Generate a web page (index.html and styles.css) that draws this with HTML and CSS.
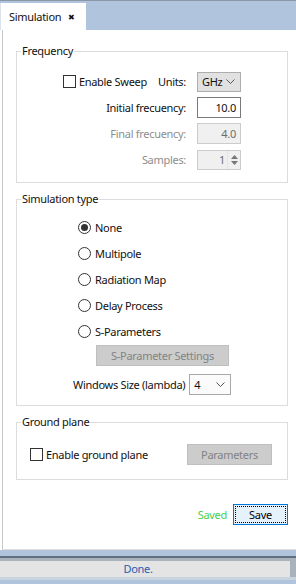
FILE: index.html
```html
<!DOCTYPE html>
<html lang="en">
<head>
    <meta charset="UTF-8">
    <meta name="viewport" content="width=device-width, initial-scale=1.0">
    <title>Simulation</title>
    <link rel="stylesheet" href="styles.css">
</head>
<body>
    <div class="tabbar">
        <div class="tab">Simulation <span class="tab-close">&#10006;</span></div>
    </div>

    <div class="panel">
        <!-- Frequency -->
        <fieldset class="group">
            <legend>Frequency</legend>
            <div class="freq">
                <div class="row">
                    <span class="check"></span>
                    <span class="check-label">Enable Sweep</span>
                    <span class="units">Units:</span>
                    <div class="combo">GHz
                        <svg class="chev" width="9" height="5" viewBox="0 0 9 5"><polyline points="0.5,0.5 4.5,4.5 8.5,0.5" fill="none" stroke="#555" stroke-width="1"/></svg>
                    </div>
                </div>
                <div class="row">
                    <span>Initial frecuency:</span>
                    <div class="field">10.0</div>
                </div>
                <div class="row disabled">
                    <span>Final frecuency:</span>
                    <div class="field off">4.0</div>
                </div>
                <div class="row disabled">
                    <span>Samples:</span>
                    <div class="spin">
                        <span class="spin-val">1</span>
                        <span class="spin-btns">
                            <svg width="7" height="4" viewBox="0 0 7 4"><polygon points="0,4 3.5,0 7,4" fill="#777"/></svg>
                            <svg width="7" height="4" viewBox="0 0 7 4"><polygon points="0,0 3.5,4 7,0" fill="#777"/></svg>
                        </span>
                    </div>
                </div>
            </div>
        </fieldset>

        <!-- Simulation type -->
        <fieldset class="group">
            <legend>Simulation type</legend>
            <div class="simtype">
                <div class="radios">
                    <div class="radio-row"><span class="radio on"></span>None</div>
                    <div class="radio-row"><span class="radio"></span>Multipole</div>
                    <div class="radio-row"><span class="radio"></span>Radiation Map</div>
                    <div class="radio-row"><span class="radio"></span>Delay Process</div>
                    <div class="radio-row"><span class="radio"></span>S-Parameters</div>
                </div>
                <button class="btn-off sparam">S-Parameter Settings</button>
                <div class="winsize">
                    <span>Windows Size (lambda)</span>
                    <div class="combo light">4
                        <svg class="chev" width="9" height="5" viewBox="0 0 9 5"><polyline points="0.5,0.5 4.5,4.5 8.5,0.5" fill="none" stroke="#555" stroke-width="1"/></svg>
                    </div>
                </div>
            </div>
        </fieldset>

        <!-- Ground plane -->
        <fieldset class="group">
            <legend>Ground plane</legend>
            <div class="ground">
                <div class="ground-check">
                    <span class="check"></span>
                    <span>Enable ground plane</span>
                </div>
                <button class="btn-off params">Parameters</button>
            </div>
        </fieldset>

        <div class="save-row">
            <span class="saved">Saved</span>
            <button class="save">Save</button>
        </div>
    </div>

    <div class="statusbar">
        <div class="status-line">
            <div class="status-text">Done.</div>
        </div>
    </div>
</body>
</html>
```

FILE: styles.css
```css
body {
    margin: 0;
    width: 296px;
    height: 584px;
    overflow: hidden;
    font-family: "Noto Sans", sans-serif;
    font-size: 11px;
    letter-spacing: -0.3px;
    color: #111;
    background-color: #fff;
    display: flex;
    flex-direction: column;
}
.tabbar {
    height: 29px;
    flex: none;
    background-color: #B0C4DE;
    border-top: 1px solid #8b97a6;
    display: flex;
    align-items: flex-end;
}
.tab {
    width: 86px;
    height: 27px;
    box-sizing: border-box;
    padding-left: 8px;
    background-color: #fff;
    border-left: 1px solid #dde3ea;
    display: flex;
    align-items: center;
}
.tab-close {
    font-size: 8px;
    margin-left: 7px;
}
.panel {
    height: 520px;
    flex: none;
    box-sizing: border-box;
    margin-left: 2px;
    border-left: 1px solid #c8c8c8;
    border-bottom: 1px solid #dedede;
    padding: 13px 8px 0 13px;
    display: flex;
    flex-direction: column;
}
.group {
    margin: 0 0 8px 0;
    padding: 0;
    min-width: 0;
    border: 1px solid #dcdcdc;
}
.group legend {
    margin-left: 4px;
    padding: 0 1px;
    line-height: 16px;
}
.freq {
    padding: 12px 46px 12px 0;
    display: flex;
    flex-direction: column;
    gap: 5px;
}
.row {
    display: flex;
    justify-content: flex-end;
    align-items: center;
    height: 21px;
}
.row.disabled {
    color: #8d8d8d;
}
.check {
    width: 13px;
    height: 13px;
    box-sizing: border-box;
    border: 1px solid #333;
    background-color: #fff;
    flex: none;
}
.check-label {
    margin-left: 3px;
}
.units {
    margin-left: 11px;
}
.combo {
    width: 44px;
    height: 20px;
    box-sizing: border-box;
    margin-left: 11px;
    padding: 0 5px 0 4px;
    background-color: #e1e1e1;
    border: 1px solid #adadad;
    display: flex;
    align-items: center;
    justify-content: space-between;
}
.combo.light {
    width: 42px;
    height: 21px;
    margin-left: 4px;
    background-color: #fbfbfb;
    border-color: #a9a9a9;
}
.field {
    width: 44px;
    height: 21px;
    box-sizing: border-box;
    margin-left: 11px;
    padding-right: 4px;
    border: 1px solid #7a7a7a;
    background-color: #fff;
    display: flex;
    align-items: center;
    justify-content: flex-end;
}
.field.off {
    border-color: #cccccc;
    background-color: #f0f0f0;
    color: #6d6d6d;
}
.spin {
    width: 44px;
    height: 20px;
    box-sizing: border-box;
    margin-left: 11px;
    border: 1px solid #cccccc;
    background-color: #f0f0f0;
    color: #6d6d6d;
    display: flex;
    align-items: stretch;
}
.spin-val {
    flex: 1;
    text-align: right;
    padding-right: 2px;
    line-height: 18px;
}
.spin-btns {
    width: 12px;
    display: flex;
    flex-direction: column;
    align-items: center;
    justify-content: center;
    gap: 2px;
    border-left: 1px solid #e4e4e4;
}
.spin-btns svg {
    display: block;
}
.simtype {
    padding: 12px 0 10px 56px;
}
.radios {
    display: flex;
    flex-direction: column;
    gap: 10px;
    padding-left: 5px;
}
.radio-row {
    height: 16px;
    display: flex;
    align-items: center;
}
.radio {
    width: 13px;
    height: 13px;
    box-sizing: border-box;
    border: 1px solid #333;
    border-radius: 50%;
    margin-right: 4px;
    display: flex;
    align-items: center;
    justify-content: center;
}
.radio.on::after {
    content: "";
    width: 7px;
    height: 7px;
    border-radius: 50%;
    background-color: #333;
}
.btn-off {
    font-family: inherit;
    font-size: 11px;
    letter-spacing: -0.3px;
    background-color: #cccccc;
    border: 1px solid #bfbfbf;
    color: #838383;
    padding: 0;
    height: 21px;
}
.sparam {
    display: block;
    width: 133px;
    margin: 6px 0 0 23px;
}
.winsize {
    margin-top: 8px;
    display: flex;
    align-items: center;
}
.ground {
    padding: 14px 15px 14px 13px;
    display: flex;
    align-items: center;
    justify-content: space-between;
}
.ground-check {
    display: flex;
    align-items: center;
    gap: 3px;
}
.params {
    width: 85px;
}
.save-row {
    margin-top: 16px;
    display: flex;
    justify-content: flex-end;
    align-items: center;
}
.saved {
    color: #48d048;
    margin-right: 6px;
}
.save {
    width: 55px;
    height: 21px;
    font-family: inherit;
    font-size: 11px;
    letter-spacing: -0.3px;
    padding: 0;
    background-color: #e5f1fb;
    border: 1px solid #0078d7;
    outline: 1px dotted #000;
    outline-offset: -3px;
}
.statusbar {
    flex: none;
    background-color: #B0C4DE;
    padding: 6px 0 4px 0;
}
.status-line {
    border-top: 2px solid #61707f;
    border-bottom: 3px solid #c9d3de;
    background-color: #a9b3be;
    padding: 3px 6px 0 0;
}
.status-text {
    height: 16px;
    line-height: 16px;
    background-color: #e4e4e4;
    text-align: center;
    padding-right: 14px;
    color: #1f5fad;
}
```
